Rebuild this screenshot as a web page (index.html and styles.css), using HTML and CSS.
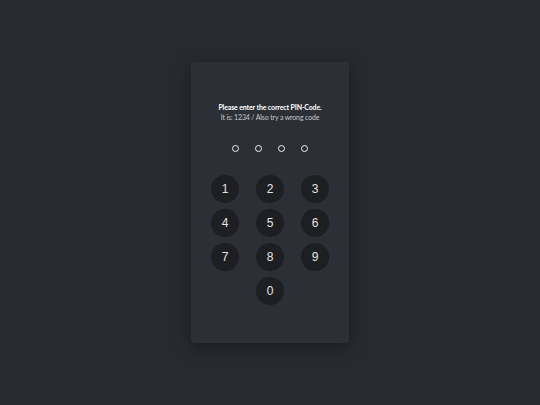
FILE: index.html
```html
<!DOCTYPE html>
<html>
<head>
<meta charset="utf-8">
<link rel="stylesheet" href="styles.css">
</head>
<body>
<div class="card">
  <p class="title">Please enter the correct PIN-Code.</p>
  <p class="subtitle">It is: 1234 / Also try a wrong code</p>
  <div class="dots">
    <span class="dot"></span><span class="dot"></span><span class="dot"></span><span class="dot"></span>
  </div>
  <div class="keypad">
    <button class="key">1</button>
    <button class="key">2</button>
    <button class="key">3</button>
    <button class="key">4</button>
    <button class="key">5</button>
    <button class="key">6</button>
    <button class="key">7</button>
    <button class="key">8</button>
    <button class="key">9</button>
    <button class="key zero">0</button>
  </div>
</div>
</body>
</html>
```
FILE: styles.css
```css
html, body {
  margin: 0;
  padding: 0;
}
body {
  background: #272a31;
  min-height: 100vh;
  display: flex;
  align-items: center;
  justify-content: center;
  font-family: "Lato", "Noto Sans", sans-serif;
}
.card {
  width: 158px;
  height: 281px;
  box-sizing: border-box;
  margin-top: -1px;
  padding-top: 40px;
  background: #2c2f36;
  border-radius: 4px;
  box-shadow: 0 4px 18px rgba(0, 0, 0, 0.35);
  display: flex;
  flex-direction: column;
  align-items: center;
}
.title, .subtitle {
  margin: 0;
  font-size: 7px;
  line-height: 10px;
  letter-spacing: -0.15px;
  text-align: center;
}
.title {
  font-weight: 700;
  color: #ffffff;
}
.subtitle {
  color: #c8c8cc;
}
.dots {
  display: flex;
  gap: 16px;
  margin-top: 23px;
}
.dot {
  width: 7px;
  height: 7px;
  box-sizing: border-box;
  border: 1.5px solid #f0f0f0;
  border-radius: 50%;
}
.keypad {
  margin-top: 23px;
  display: grid;
  grid-template-columns: repeat(3, 28px);
  grid-auto-rows: 28px;
  column-gap: 17px;
  row-gap: 6px;
}
.key {
  width: 28px;
  height: 28px;
  padding: 0;
  border: none;
  border-radius: 50%;
  background: #1e1f23;
  color: #e4e4e4;
  font-family: "Liberation Sans", Arial, sans-serif;
  font-size: 12px;
  display: flex;
  align-items: center;
  justify-content: center;
}
.zero {
  grid-column: 2;
}
```
